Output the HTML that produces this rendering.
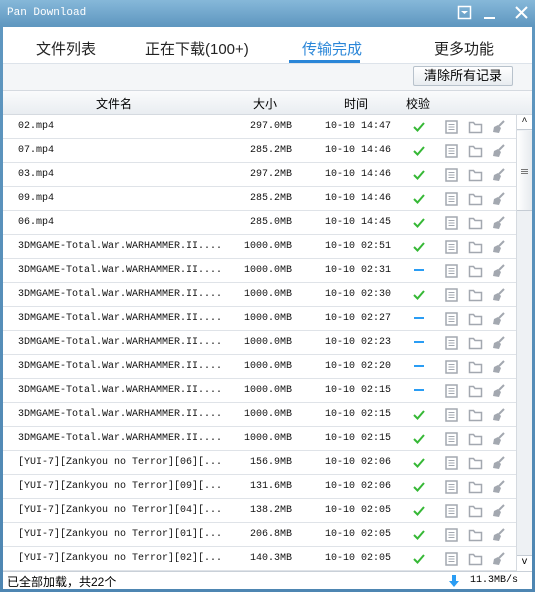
<!DOCTYPE html><html><head><meta charset="utf-8"><style>
*{margin:0;padding:0;box-sizing:border-box}
body{width:535px;height:592px;overflow:hidden;background:#5d94bd;font-family:"Liberation Mono","Noto Sans CJK SC",monospace;}
.win{position:absolute;left:0;top:0;width:535px;height:592px;background:linear-gradient(#86b8d9,#5f97c0 26px,#4e86b2);}
.title{position:absolute;left:7px;top:7px;color:#fff;font-size:11px;font-family:"Liberation Mono",monospace;}
.body{position:absolute;left:3px;top:27px;width:529px;height:562px;background:#fff;}
.tabs{position:absolute;left:0;top:0;width:529px;height:37px;border-bottom:1px solid #dde3ea;font-family:"Liberation Sans","Noto Sans CJK SC",sans-serif;font-size:15px;color:#222}
.tabs span{position:absolute;top:11px}
.tb{position:absolute;top:37px;height:27px;width:529px;background:#f4f6f8;border-bottom:1px solid #d5dae0}
.btn{position:absolute;left:410px;top:2px;width:100px;height:20px;border:1px solid #b8c2cc;background:linear-gradient(#fff,#e8ecf0);font-size:13px;text-align:center;line-height:18px;font-family:"Liberation Sans","Noto Sans CJK SC",sans-serif;border-radius:2px}
.hd{position:absolute;top:64px;height:24px;width:529px;background:linear-gradient(#fafbfc,#e9edf1);border-bottom:1px solid #d5dae0;font-size:12px;font-family:"Liberation Sans","Noto Sans CJK SC",sans-serif}
.hd span{position:absolute;top:4px}
.rows{position:absolute;top:88px;left:0;width:513px}
.r{height:24px;border-bottom:1px solid #dfe3e8;position:relative;font-size:10px;color:#111}
.r span{position:absolute;top:6px}
.n{left:15px}.s{left:232px;width:57px;text-align:right}.t{left:322px}
.ck{position:absolute;left:409px;top:6px}
.ic{position:absolute;left:440px;top:5px}
.sb{position:absolute;left:513px;top:88px;width:16px;height:456px;background:#eef1f4;border-left:1px solid #d5dae0}
.st{position:absolute;top:544px;left:0;width:529px;height:18px;border-top:1px solid #c9d0d8;font-size:12px;font-family:"Liberation Sans","Noto Sans CJK SC",sans-serif;background:#fff}
</style></head><body><div class="win">
<div class="title">Pan Download</div>
<svg style="position:absolute;left:457px;top:5px" width="75" height="18"><rect x="1.5" y="1.5" width="12" height="12" fill="none" stroke="#fff" stroke-width="1.5"/><path d="M4 6h7l-3.5 3z" fill="#fff"/><rect x="27" y="12" width="11" height="2" fill="#fff"/><path d="M59 2l11 11M70 2l-11 11" stroke="#fff" stroke-width="2"/></svg>
<div class="body">
<div class="tabs"><span style="left:33px">文件列表</span><span style="left:142px">正在下载(100+)</span><span style="left:299px;color:#2a86d8">传输完成</span><span style="left:431px">更多功能</span><div style="position:absolute;left:286px;top:33px;width:71px;height:3px;background:#2a86d8"></div></div>
<div class="tb"><div class="btn">清除所有记录</div></div>
<div class="hd"><span style="left:93px">文件名</span><span style="left:250px">大小</span><span style="left:341px">时间</span><span style="left:403px">校验</span></div>
<div class="rows" id="rows">
</div>
<div class="sb"><div style="height:15px;border-bottom:1px solid #c5ccd4;background:#fff;text-align:center;font-size:10px;line-height:15px">^</div><div style="position:absolute;top:16px;left:0;width:15px;height:80px;background:linear-gradient(90deg,#fff,#e6eaee);border-bottom:1px solid #c5ccd4"><div style="position:absolute;left:4px;top:38px;width:7px;height:5px;border-top:1px solid #777;border-bottom:1px solid #777"></div><div style="position:absolute;left:4px;top:40px;width:7px;height:1px;background:#777"></div></div><div style="position:absolute;bottom:0;width:15px;height:16px;background:#fff;border-top:1px solid #c5ccd4;text-align:center;font-size:10px;line-height:14px">v</div></div>
<div class="st"><span style="position:absolute;left:4px;top:1px">已全部加载，共22个</span><svg style="position:absolute;left:446px;top:3px" width="10" height="12"><path d="M3 0h4v6h3l-5 6-5-6h3z" fill="#2a9df4"/></svg><span style="position:absolute;left:467px;top:3px;font-size:10px;font-family:'Liberation Mono',monospace">11.3MB/s</span></div>
</div></div>
<script>
var d=[["02.mp4","297.0MB","10-10 14:47",1],["07.mp4","285.2MB","10-10 14:46",1],["03.mp4","297.2MB","10-10 14:46",1],["09.mp4","285.2MB","10-10 14:46",1],["06.mp4","285.0MB","10-10 14:45",1]];
var W="3DMGAME-Total.War.WARHAMMER.II....";
[["02:51",1],["02:31",0],["02:30",1],["02:27",0],["02:23",0],["02:20",0],["02:15",0],["02:15",1],["02:15",1]].forEach(function(a){d.push([W,"1000.0MB","10-10 "+a[0],a[1]])});
[["06","156.9MB","02:06"],["09","131.6MB","02:06"],["04","138.2MB","02:05"],["01","206.8MB","02:05"],["02","140.3MB","02:05"]].forEach(function(a){d.push(["[YUI-7][Zankyou no Terror]["+a[0]+"][...",a[1],"10-10 "+a[2],1])});
var ic='<svg class="ic" width="66" height="14"><rect x="3" y="1" width="11" height="12" fill="none" stroke="#a3a8b0" stroke-width="1.5"/><path d="M5.5 4.5h6M5.5 7h6M5.5 9.5h6" stroke="#a3a8b0"/><path d="M26.5 2.5h4l1.5 2h6.5v8h-12z" fill="none" stroke="#a3a8b0" stroke-width="1.5"/><path d="M61 1l-5 5" stroke="#a3a8b0" stroke-width="2"/><path d="M51 7l4-2 3 3-2 5-6-1z" fill="#a3a8b0"/></svg>';
var ok='<svg class="ck" width="14" height="12"><path d="M2 6l3.5 3.5L12 2" fill="none" stroke="#36b836" stroke-width="2"/></svg>';
var no='<svg class="ck" width="14" height="12"><rect x="2" y="4" width="10" height="2" fill="#2a9df4"/></svg>';
var h="";d.forEach(function(r){h+='<div class="r"><span class="n">'+r[0]+'</span><span class="s">'+r[1]+'</span><span class="t">'+r[2]+'</span>'+(r[3]?ok:no)+ic+'</div>'});
document.getElementById("rows").innerHTML=h;
</script></body></html>
